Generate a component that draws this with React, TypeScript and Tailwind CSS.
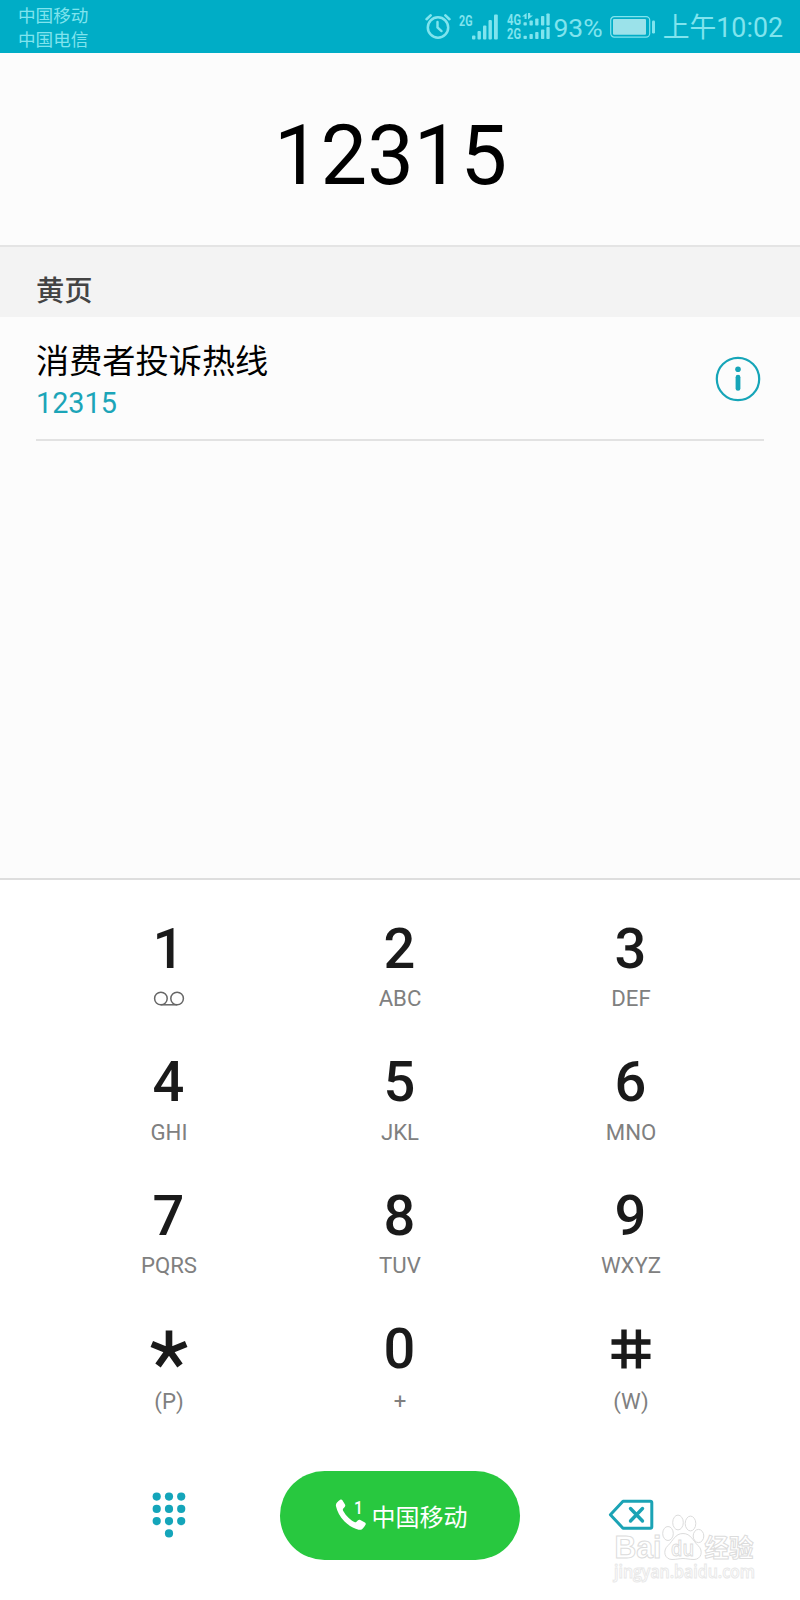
import React from 'react';

const keys = [
  { digit: '1', letters: '' },
  { digit: '2', letters: 'ABC' },
  { digit: '3', letters: 'DEF' },
  { digit: '4', letters: 'GHI' },
  { digit: '5', letters: 'JKL' },
  { digit: '6', letters: 'MNO' },
  { digit: '7', letters: 'PQRS' },
  { digit: '8', letters: 'TUV' },
  { digit: '9', letters: 'WXYZ' },
  { digit: '*', letters: '(P)' },
  { digit: '0', letters: '+' },
  { digit: '#', letters: '(W)' }
];

const AlarmIcon: React.FC = () => (
  <svg width="26" height="27" viewBox="0 0 26 27" fill="none" stroke="currentColor" strokeLinecap="round">
    <circle cx="13" cy="14.5" r="10.2" strokeWidth="2.5" />
    <path d="M12.5 9v5.5l4 3.6" strokeWidth="2.4" />
    <path d="M1.6 6.2 5.6 2.4M24.4 6.2 20.4 2.4" strokeWidth="2.6" />
  </svg>
);

const SignalIcon: React.FC = () => (
  <svg className="overflow-visible" width="40" height="26" viewBox="0 0 40 26" fill="currentColor">
    <text x="0" y="11.5" fontSize="15" fontWeight="700" textLength="13.5" lengthAdjust="spacingAndGlyphs">2G</text>
    <rect x="13" y="21.5" width="3.4" height="4" rx="1" />
    <rect x="18.5" y="17" width="3.4" height="8.5" rx="1" />
    <rect x="24" y="11.5" width="3.4" height="14" rx="1" />
    <rect x="29.5" y="6" width="3.4" height="19.5" rx="1" />
    <rect x="35" y="0.5" width="3.8" height="25" rx="1" />
  </svg>
);

const DualSignalIcon: React.FC = () => (
  <svg className="overflow-visible" width="44" height="28" viewBox="0 0 44 28" fill="currentColor">
    <text x="0" y="12" fontSize="15" fontWeight="700" textLength="14" lengthAdjust="spacingAndGlyphs">4G</text>
    <text x="0" y="26" fontSize="15" fontWeight="700" textLength="14" lengthAdjust="spacingAndGlyphs">2G</text>
    <path d="M17.6 6V3.4h-2.6L19.6 0v6zM21 0h2.2v2.6h2.8L21 6.4z" />
    <rect x="16.5" y="9.2" width="3.3" height="3.3" rx="0.8" />
    <rect x="22.5" y="7.5" width="3.3" height="5" rx="0.8" />
    <rect x="28.2" y="5.5" width="3.3" height="7" rx="0.8" />
    <rect x="34" y="3" width="3.3" height="9.5" rx="0.8" />
    <rect x="39.4" y="0.5" width="3.3" height="12" rx="0.8" />
    <rect x="16.5" y="22.7" width="3.3" height="3.3" rx="0.8" />
    <rect x="22.5" y="21" width="3.3" height="5" rx="0.8" />
    <rect x="28.2" y="19" width="3.3" height="7" rx="0.8" />
    <rect x="34" y="16.5" width="3.3" height="9.5" rx="0.8" />
    <rect x="39.4" y="14" width="3.3" height="12" rx="0.8" />
  </svg>
);

const BatteryIcon: React.FC = () => (
  <svg width="46" height="22" viewBox="0 0 46 22">
    <rect x="0.7" y="0.7" width="39" height="20.4" rx="3.6" fill="none" stroke="currentColor" strokeWidth="1.2" />
    <rect x="3" y="3" width="33" height="15.8" rx="1" fill="#9be2ea" />
    <rect x="42" y="4.5" width="3" height="13" rx="1.2" fill="currentColor" />
  </svg>
);

const InfoIcon: React.FC = () => (
  <svg width="46" height="46" viewBox="0 0 46 46">
    <circle cx="23" cy="23" r="21.2" fill="none" stroke="#16a5b8" strokeWidth="2.2" />
    <circle cx="23" cy="13.2" r="2.8" fill="#16a5b8" />
    <rect x="20.6" y="18.8" width="4.8" height="16" rx="2.4" fill="#16a5b8" />
  </svg>
);

const VoicemailIcon: React.FC = () => (
  <svg width="32" height="16" viewBox="0 0 32 16" fill="none" stroke="#666" strokeWidth="1.5">
    <circle cx="7.9" cy="7.5" r="6.3" />
    <circle cx="24.1" cy="7.5" r="6.3" />
    <path d="M7.7 13.8h16.4" />
  </svg>
);

const StarGlyph: React.FC = () => (
  <svg width="38" height="38" viewBox="0 0 38 38" fill="none" stroke="#1a1a1a" strokeWidth="6.6">
    <path d="M19 0.5V22M1.8 14 19 21 36.2 14M19 20 8 35.5M19 20 30 35.5" />
  </svg>
);

const HashGlyph: React.FC = () => (
  <svg width="40" height="40" viewBox="0 0 40 40" fill="none" stroke="#1a1a1a" strokeWidth="5.4">
    <path d="M13 0.5v39M27.4 0.5v39M0.5 13h39M0.5 27.4h39" />
  </svg>
);

const DialpadIcon: React.FC = () => (
  <svg width="34" height="46" viewBox="0 0 34 46" fill="#14a5ba">
    {[4.7, 17, 29.2].map((x) =>
      [4.6, 16.9, 29.1].map((y) => <circle key={`${x}-${y}`} cx={x} cy={y} r="4.1" />)
    )}
    <circle cx="17" cy="41.4" r="4.1" />
  </svg>
);

const BackspaceIcon: React.FC = () => (
  <svg width="46" height="32" viewBox="0 0 46 32" fill="none" stroke="#1ba3b5" strokeWidth="3" strokeLinejoin="round" strokeLinecap="round">
    <path d="M15 2.3H42.3Q43.8 2.3 43.8 3.8V27.7Q43.8 29.2 42.3 29.2H15L2.4 15.8z" />
    <path d="M22.5 9.5 34.5 22M34.5 9.5 22.5 22" strokeWidth="3.4" />
  </svg>
);

const PhoneIcon: React.FC = () => (
  <svg width="32" height="32" viewBox="0 0 32 32" fill="#fff">
    <path d="M5.2 0.8C6 0.2 6.9 0.5 7.4 1.3L10 5.6C10.5 6.4 10.3 7.2 9.7 7.9L8.3 9.6C7.8 10.2 7.7 11 8.1 11.7C9.5 14.3 11.3 16.7 13.5 18.8C15.5 20.7 17.3 22 19.5 23.1C20.2 23.5 20.9 23.3 21.5 22.8L23 21.3C23.7 20.7 24.5 20.6 25.3 21L29.9 23.6C30.8 24.1 31 25 30.5 25.8C29.5 27.6 28.7 28.9 27.3 30C26.2 30.9 24.9 31 23.6 30.7C18.5 29.5 13.5 26.5 9.3 22.2C5 17.8 2 12.4 1 7.3C0.7 5.9 1 4.6 2 3.5C3 2.4 4 1.6 5.2 0.8z" />
    <text x="19" y="14.6" fontSize="18.5" fontWeight="500" textLength="9" lengthAdjust="spacingAndGlyphs">1</text>
  </svg>
);

const Watermark: React.FC = () => (
  <svg className="absolute left-[608px] top-[1508px]" width="160" height="80" viewBox="0 0 160 80" fill="#fff" stroke="#dcdcdc" strokeWidth="1">
    <text x="6.5" y="50" fontSize="32" fontWeight="700" textLength="47" lengthAdjust="spacingAndGlyphs" fontFamily="'Liberation Sans', sans-serif">Bai</text>
    <ellipse cx="60" cy="25.5" rx="5.3" ry="7" />
    <ellipse cx="70" cy="14.5" rx="5.3" ry="7.4" />
    <ellipse cx="82.5" cy="15.5" rx="5.3" ry="7.4" />
    <ellipse cx="90.5" cy="28" rx="5.3" ry="6.6" />
    <path d="M75 25.5C83 25.5 85 33 90 37.5C96 43 93 51.5 86 51.5C81 51.5 79 50.5 75 50.5C71 50.5 69 51.5 64 51.5C57 51.5 54 43 60 37.5C65 33 67 25.5 75 25.5z" />
    <text x="63" y="48" fontSize="21" fontWeight="600" textLength="23" lengthAdjust="spacingAndGlyphs" fontFamily="'Open Sans', sans-serif">du</text>
    <text x="96.5" y="49" fontSize="24.5" fontWeight="700" fontFamily="'Noto Sans CJK SC', sans-serif">经验</text>
    <text x="6" y="70" fontSize="18" fontWeight="600" textLength="141" lengthAdjust="spacingAndGlyphs" fontFamily="'Open Sans', sans-serif" stroke="#e8e8e8">jingyan.baidu.com</text>
  </svg>
);

const StatusBar: React.FC = () => (
  <div className="flex h-[53px] items-center justify-between bg-[#00adc6] pl-[18px] pr-[17px] text-[#80e4ee]">
    <div className="pt-[2px] text-[17.6px] leading-[24px]">
      <div>中国移动</div>
      <div>中国电信</div>
    </div>
    <div className="flex items-center">
      <AlarmIcon />
      <div className="ml-[8px]">
        <SignalIcon />
      </div>
      <div className="ml-[8px]">
        <DualSignalIcon />
      </div>
      <span className="ml-[2px] pt-[2px] text-[26.5px]">93%</span>
      <div className="ml-[7px]">
        <BatteryIcon />
      </div>
      <span className="ml-[7px] pt-[3px] text-[26.8px]">上午10:02</span>
    </div>
  </div>
);

const App: React.FC = () => {
  return (
    <div className="relative flex h-[1600px] w-[800px] flex-col overflow-hidden bg-[#fcfcfc] font-['Roboto','Noto_Sans_CJK_SC',sans-serif]">
      <StatusBar />

      {/* Number being dialled */}
      <div className="flex h-[192px] items-center justify-center pr-[19px] pt-[14px] text-[83px] text-black">
        12315
      </div>

      {/* Yellow pages results */}
      <div className="flex h-[72px] items-center border-t-2 border-[#e4e4e4] bg-[#f3f3f3] pl-[36px] pt-[20px] text-[28.3px] font-medium text-[#444]">
        黄页
      </div>
      <div className="mx-[36px] flex h-[124px] items-center justify-between border-b-2 border-[#e2e2e2]">
        <div className="pt-[8px]">
          <div className="text-[33.2px] leading-[42px] text-black">消费者投诉热线</div>
          <div className="text-[28.8px] leading-[40px] text-[#1ba5b8]">12315</div>
        </div>
        <div className="mr-[3px] pt-[2px]">
          <InfoIcon />
        </div>
      </div>

      {/* Keypad */}
      <div className="mt-auto h-[722px] border-t-2 border-[#dedede] bg-white">
        <div className="ml-[53px] mr-[54px] grid grid-cols-3 pt-[37px]">
          {keys.map(({ digit, letters }) => (
            <button key={digit} className="flex h-[133.4px] flex-col items-center">
              <span className="flex h-[64px] items-center text-[56px] font-medium leading-[64px] text-[#1a1a1a]">
                {digit === '*' ? <StarGlyph /> : digit === '#' ? <HashGlyph /> : digit}
              </span>
              <span className={`flex h-[36px] items-center pl-[1px] text-[22.2px] text-[#808080] ${'*0#'.includes(digit) ? 'mt-[2px]' : ''}`}>
                {letters || <VoicemailIcon />}
              </span>
            </button>
          ))}
        </div>
        <div className="mx-[53px] grid grid-cols-3 items-center pt-[20px]">
          <div className="flex justify-center">
            <DialpadIcon />
          </div>
          <button className="-mx-[4.5px] flex h-[89px] items-center justify-center rounded-full bg-[#28c83f] pl-[3px] text-[24px] text-white">
            <PhoneIcon />
            <span className="ml-[4px] pt-[5px]">中国移动</span>
          </button>
          <div className="flex justify-center">
            <BackspaceIcon />
          </div>
        </div>
      </div>

      <Watermark />
    </div>
  );
};

export default App;
